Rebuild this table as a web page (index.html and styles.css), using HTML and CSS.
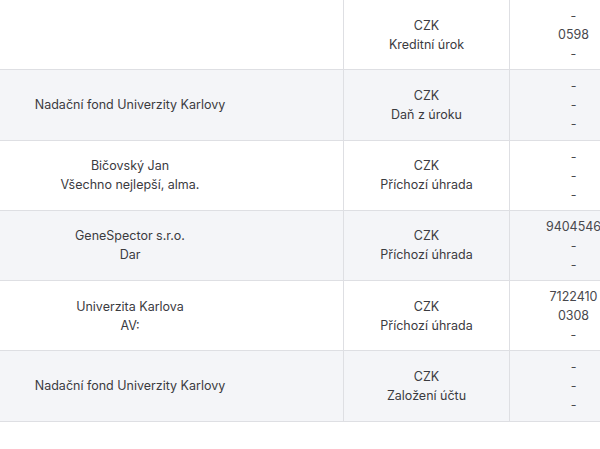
FILE: index.html
```html
<!DOCTYPE html>
<html lang="cs">
<head>
<meta charset="utf-8">
<link rel="stylesheet" href="styles.css">
</head>
<body>
<div class="table">
  <div class="row">
    <div class="cell name"></div>
    <div class="cell spacer"></div>
    <div class="cell type">CZK<br>Kreditní úrok</div>
    <div class="cell ref">-<br>0598<br>-</div>
  </div>
  <div class="row alt">
    <div class="cell name">Nadační fond Univerzity Karlovy</div>
    <div class="cell spacer"></div>
    <div class="cell type">CZK<br>Daň z úroku</div>
    <div class="cell ref">-<br>-<br>-</div>
  </div>
  <div class="row">
    <div class="cell name">Bičovský Jan<br>Všechno nejlepší, alma.</div>
    <div class="cell spacer"></div>
    <div class="cell type">CZK<br>Příchozí úhrada</div>
    <div class="cell ref">-<br>-<br>-</div>
  </div>
  <div class="row alt">
    <div class="cell name">GeneSpector s.r.o.<br>Dar</div>
    <div class="cell spacer"></div>
    <div class="cell type">CZK<br>Příchozí úhrada</div>
    <div class="cell ref">9404546<br>-<br>-</div>
  </div>
  <div class="row">
    <div class="cell name">Univerzita Karlova<br>AV:</div>
    <div class="cell spacer"></div>
    <div class="cell type">CZK<br>Příchozí úhrada</div>
    <div class="cell ref">7122410<br>0308<br>-</div>
  </div>
  <div class="row alt">
    <div class="cell name">Nadační fond Univerzity Karlovy</div>
    <div class="cell spacer"></div>
    <div class="cell type">CZK<br>Založení účtu</div>
    <div class="cell ref">-<br>-<br>-</div>
  </div>
</div>
</body>
</html>
```

FILE: styles.css
```css
html, body {
  margin: 0;
  padding: 0;
  background: #ffffff;
  overflow: hidden;
}

body {
  font-family: Inter, "Noto Sans", sans-serif;
  font-size: 12.5px;
  line-height: 19px;
  color: #3b3b3f;
  width: 600px;
  height: 449px;
}

.table {
  width: 637px;
}

.row {
  display: grid;
  grid-template-columns: 260px 83px 166px 128px;
  height: 70.25px;
  box-sizing: border-box;
  border-bottom: 1px solid #dedfe3;
  background: #ffffff;
}

.row.alt {
  background: #f4f5f8;
}

.cell {
  display: flex;
  align-items: center;
  justify-content: center;
  text-align: center;
  box-sizing: border-box;
}

.type,
.ref {
  border-left: 1px solid #dedfe3;
}

.ref {
  color: #48484d;
}
```
